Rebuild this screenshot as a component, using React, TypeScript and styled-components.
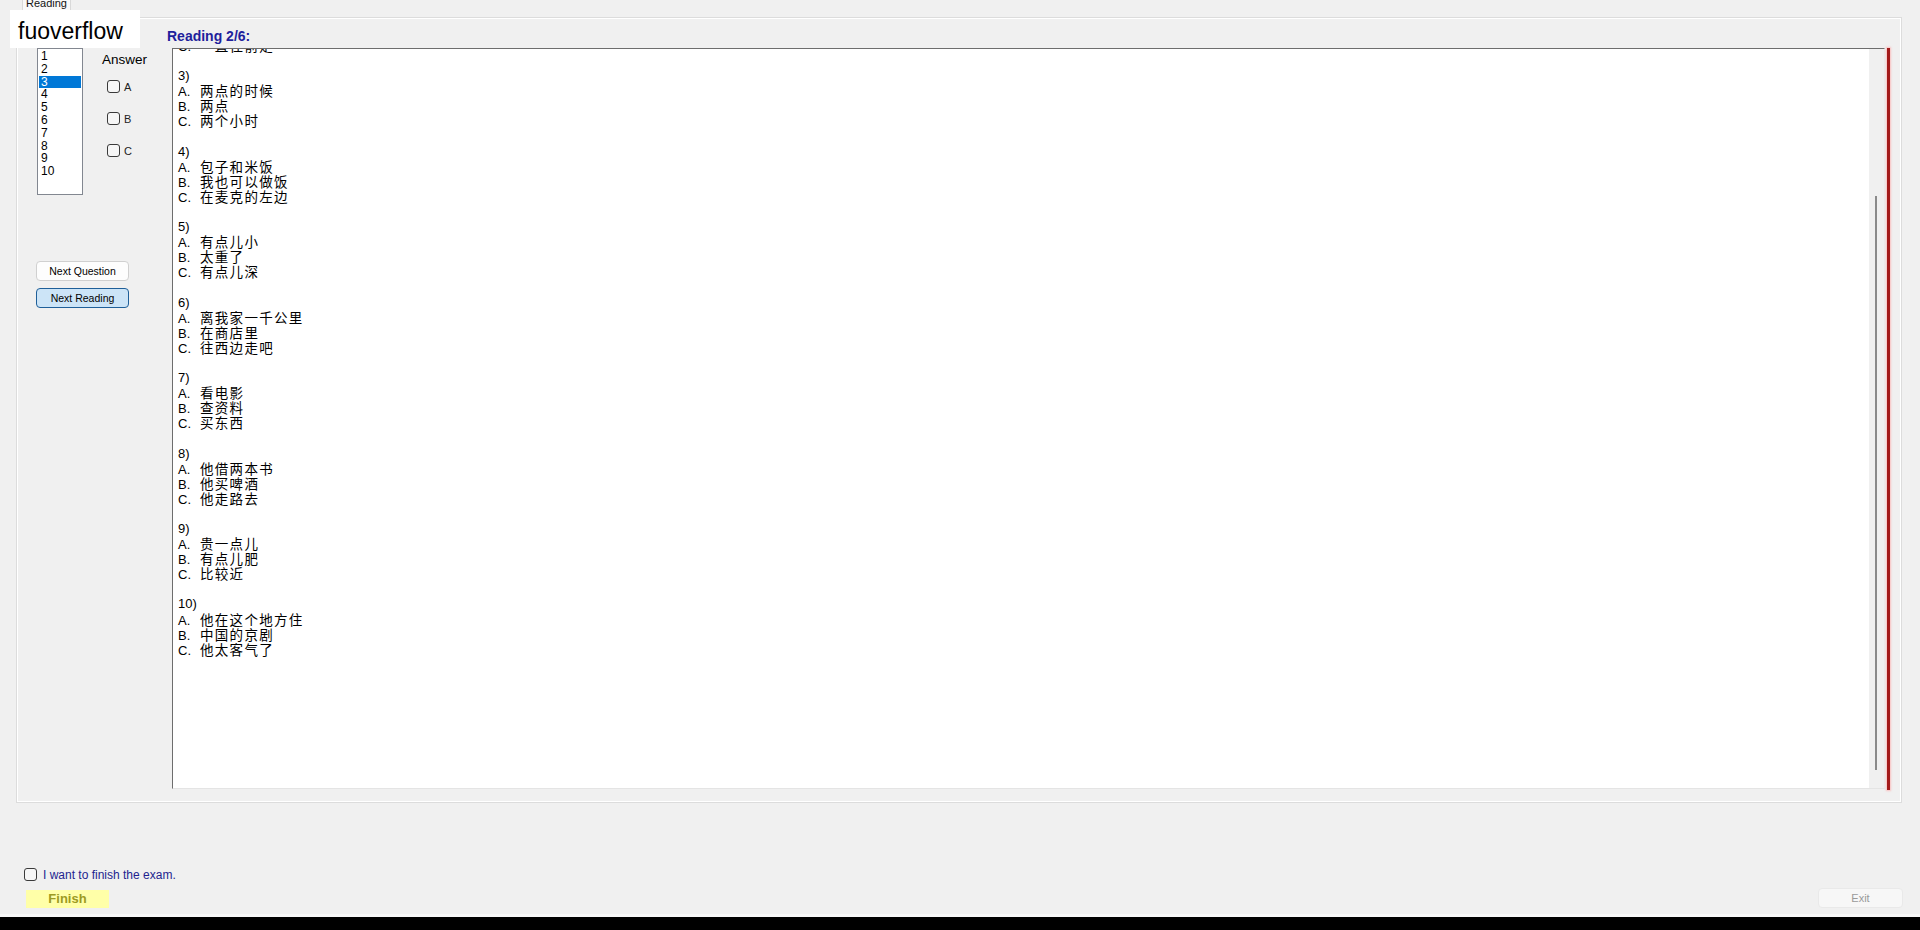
import React from 'react'
import styled, { createGlobalStyle } from 'styled-components'

const GlobalStyle = createGlobalStyle`
  html, body {
    margin: 0;
    padding: 0;
    background: #f0f0f0;
  }
  body {
    font-family: "Liberation Sans", Arial, "Noto Sans CJK SC", sans-serif;
    overflow: hidden;
  }
`

const questions: { no: string; options: string[] }[] = [
  { no: '3)', options: ['两点的时候', '两点', '两个小时'] },
  { no: '4)', options: ['包子和米饭', '我也可以做饭', '在麦克的左边'] },
  { no: '5)', options: ['有点儿小', '太重了', '有点儿深'] },
  { no: '6)', options: ['离我家一千公里', '在商店里', '往西边走吧'] },
  { no: '7)', options: ['看电影', '查资料', '买东西'] },
  { no: '8)', options: ['他借两本书', '他买啤酒', '他走路去'] },
  { no: '9)', options: ['贵一点儿', '有点儿肥', '比较近'] },
  { no: '10)', options: ['他在这个地方住', '中国的京剧', '他太客气了'] },
]

const letters = ['A', 'B', 'C']
const numbers = ['1', '2', '3', '4', '5', '6', '7', '8', '9', '10']

const App = () => {
  return (
    <>
      <GlobalStyle />
      <Root>
        <Watermark>fuoverflow</Watermark>
        <TabArea>
          <TabStrip>
            <Tab>Reading</Tab>
          </TabStrip>
          <TabPage>
            <LeftPane>
              <TopRow>
                <ListBox>
                  {numbers.map((n) => (
                    <ListItem key={n} $selected={n === '3'}>
                      {n}
                    </ListItem>
                  ))}
                </ListBox>
                <AnswerCol>
                  <AnswerLabel>Answer</AnswerLabel>
                  {letters.map((l) => (
                    <CheckRow key={l}>
                      <Box />
                      <span>{l}</span>
                    </CheckRow>
                  ))}
                </AnswerCol>
              </TopRow>
              <ButtonCol>
                <NavButton>Next Question</NavButton>
                <NavButton $active>Next Reading</NavButton>
              </ButtonCol>
            </LeftPane>
            <RightPane>
              <Title>Reading 2/6:</Title>
              <TextRow>
                <TextBox>
                  <Content>
                    <Line>
                      <Opt>C.</Opt>
                      <Cjk>一直往前走</Cjk>
                    </Line>
                    <Line />
                    {questions.map((q) => (
                      <React.Fragment key={q.no}>
                        <Line>{q.no}</Line>
                        {q.options.map((o, i) => (
                          <Line key={i}>
                            <Opt>{letters[i]}.</Opt>
                            <Cjk>{o}</Cjk>
                          </Line>
                        ))}
                        <Line />
                      </React.Fragment>
                    ))}
                  </Content>
                  <ScrollTrack>
                    <Thumb />
                  </ScrollTrack>
                </TextBox>
                <RedMark />
              </TextRow>
            </RightPane>
          </TabPage>
        </TabArea>
        <Footer>
          <FinishCol>
            <ConfirmRow>
              <Box />
              <span>I want to finish the exam.</span>
            </ConfirmRow>
            <FinishButton>Finish</FinishButton>
          </FinishCol>
          <ExitButton>Exit</ExitButton>
        </Footer>
        <BlackBar />
      </Root>
    </>
  )
}

const Root = styled.div`
  position: relative;
  width: 1920px;
  height: 930px;
  display: flex;
  flex-direction: column;
  background: #f0f0f0;
  color: #000;
`

const Watermark = styled.div`
  position: absolute;
  left: 10px;
  top: 10px;
  width: 130px;
  height: 38px;
  box-sizing: border-box;
  padding-left: 8px;
  background: #fff;
  font-size: 23px;
  line-height: 42px;
  color: #000;
`

const TabArea = styled.div`
  margin-left: 16px;
  width: 1886px;
`

const TabStrip = styled.div`
  height: 17px;
  display: flex;
  align-items: flex-start;
  padding-left: 6px;
`

const Tab = styled.div`
  width: 49px;
  height: 17px;
  box-sizing: border-box;
  border: 1px solid #d9d9d9;
  border-top: none;
  border-bottom: none;
  background: #f9f9f9;
  font-size: 11px;
  line-height: 7px;
  text-align: center;
  overflow: hidden;
  color: #111;
`

const TabPage = styled.div`
  height: 786px;
  box-sizing: border-box;
  border: 1px solid #dcdcdc;
  box-shadow: inset 1px 1px 0 #fff, inset -1px -1px 0 #fff;
  display: flex;
`

const LeftPane = styled.div`
  width: 150px;
  flex-shrink: 0;
  box-sizing: border-box;
  padding: 30px 0 0 20px;
  display: flex;
  flex-direction: column;
`

const TopRow = styled.div`
  display: flex;
  gap: 19px;
  height: 147px;
`

const ListBox = styled.div`
  width: 46px;
  height: 147px;
  box-sizing: border-box;
  border: 1px solid #828790;
  background: #fff;
  padding: 1px 1px 0;
  font-size: 12px;
`

const ListItem = styled.div<{ $selected?: boolean }>`
  height: 12.8px;
  line-height: 13px;
  padding-left: 2px;
  background: ${(p) => (p.$selected ? '#0078d7' : 'transparent')};
  color: ${(p) => (p.$selected ? '#fff' : '#000')};
`

const AnswerCol = styled.div`
  display: flex;
  flex-direction: column;
  padding-top: 3px;
  gap: 19px;
`

const AnswerLabel = styled.div`
  font-size: 13.5px;
  line-height: 16px;
  margin-bottom: -7px;
  padding-top: 1px;
`

const CheckRow = styled.div`
  display: flex;
  align-items: center;
  gap: 4px;
  padding-left: 5px;
  height: 13px;
  font-size: 11px;
  color: #222;
`

const Box = styled.div`
  width: 13px;
  height: 13px;
  box-sizing: border-box;
  border: 1px solid #3a3a3a;
  border-radius: 3px;
  background: #f6f6f6;
  flex-shrink: 0;
`

const ButtonCol = styled.div`
  margin-top: 66px;
  margin-left: -1px;
  display: flex;
  flex-direction: column;
  gap: 7px;
`

const NavButton = styled.div<{ $active?: boolean }>`
  width: 93px;
  height: 20px;
  box-sizing: border-box;
  border: 1px solid ${(p) => (p.$active ? '#1f5f99' : '#d0d0d0')};
  border-radius: 4px;
  background: ${(p) => (p.$active ? '#cce4f7' : '#fdfdfd')};
  font-size: 10.5px;
  line-height: 18px;
  text-align: center;
  color: #000;
`

const RightPane = styled.div`
  display: flex;
  flex-direction: column;
  padding-top: 10px;
`

const Title = styled.div`
  font-size: 14px;
  font-weight: bold;
  line-height: 17px;
  color: #1f1f9c;
  margin-bottom: 3px;
`

const TextRow = styled.div`
  display: flex;
  height: 741px;
  padding-left: 5px;
`

const TextBox = styled.div`
  width: 1713px;
  height: 741px;
  box-sizing: border-box;
  border-top: 1px solid #6d6d6d;
  border-left: 1px solid #6d6d6d;
  border-right: 1px solid #ececec;
  border-bottom: 1px solid #e4e4e4;
  background: #fff;
  display: flex;
  overflow: hidden;
`

const Content = styled.div`
  flex: 1;
  padding-left: 5px;
  margin-top: -11px;
  font-size: 13px;
  line-height: 15.1px;
  color: #000;
`

const Line = styled.div`
  height: 15.1px;
  white-space: nowrap;
`

const Opt = styled.span`
  display: inline-block;
  width: 22px;
`

const Cjk = styled.span`
  font-family: "Noto Sans CJK SC", sans-serif;
  font-size: 13.5px;
  line-height: 15px;
  letter-spacing: 1.3px;
`

const ScrollTrack = styled.div`
  width: 15px;
  flex-shrink: 0;
  background: #f0f0f0;
  display: flex;
  flex-direction: column;
  padding-top: 147px;
  box-sizing: border-box;
`

const Thumb = styled.div`
  width: 2px;
  height: 574px;
  margin-left: 6px;
  background: #8a8a8a;
`

const RedMark = styled.div`
  width: 3px;
  height: 742px;
  margin-left: 2px;
  background: #a31a1a;
  box-shadow: 0 0 2px 1px rgba(255, 160, 160, 0.6);
`

const Footer = styled.div`
  flex: 1;
  display: flex;
  justify-content: space-between;
  align-items: flex-end;
  padding: 0 17px 6px 24px;
`

const FinishCol = styled.div`
  display: flex;
  flex-direction: column;
`

const ConfirmRow = styled.div`
  display: flex;
  align-items: center;
  gap: 6px;
  height: 13px;
  margin-bottom: 9px;
  font-size: 12px;
  color: #231f8f;
`

const FinishButton = styled.div`
  width: 83px;
  height: 18px;
  margin-left: 2px;
  background: #ffffa8;
  color: #9c9a22;
  font-size: 13px;
  font-weight: bold;
  line-height: 18px;
  text-align: center;
`

const ExitButton = styled.div`
  width: 85px;
  height: 20px;
  box-sizing: border-box;
  border: 1px solid #e9e9e9;
  border-radius: 4px;
  background: #f7f7f7;
  color: #9a9a9a;
  font-size: 11px;
  line-height: 18px;
  text-align: center;
`

const BlackBar = styled.div`
  height: 13px;
  border-top: 3px solid #f8f8f8;
  background: #000;
`

export default App
